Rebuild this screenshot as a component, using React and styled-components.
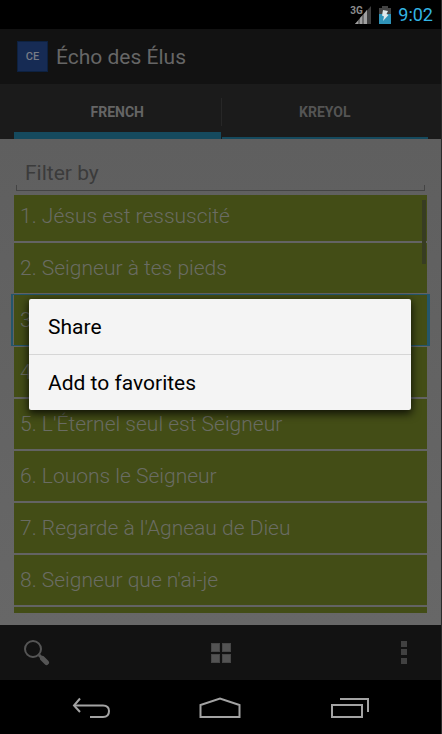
import React, { useState } from 'react';
import styled, { createGlobalStyle } from 'styled-components';

const songs = [
    'Jésus est ressuscité',
    'Seigneur à tes pieds',
    '',
    '',
    "L'Éternel seul est Seigneur",
    'Louons le Seigneur',
    "Regarde à l'Agneau de Dieu",
    "Seigneur que n'ai-je",
];

const App = () => {
    const [filter, setFilter] = useState('');
    const [tab, setTab] = useState('french');

    return (
        <Screen>
            <GlobalStyle />
            <StatusBar>
                <Signal>
                    <Network>3G</Network>
                    <SignalIcon />
                </Signal>
                <BatteryIcon />
                <Clock>9:02</Clock>
            </StatusBar>

            <ActionBar>
                <AppIcon>CE</AppIcon>
                <Title>Écho des Élus</Title>
            </ActionBar>

            <Tabs role="tablist">
                <Tab role="tab" aria-selected={tab === 'french'} $active={tab === 'french'} onClick={() => setTab('french')}>
                    FRENCH
                </Tab>
                <TabDivider />
                <Tab role="tab" aria-selected={tab === 'kreyol'} $active={tab === 'kreyol'} onClick={() => setTab('kreyol')}>
                    KREYOL
                </Tab>
            </Tabs>

            <Content>
                <FilterBox>
                    <FilterInput
                        aria-label="Filter by"
                        placeholder="Filter by"
                        value={filter}
                        onChange={(e) => setFilter(e.target.value)}
                    />
                </FilterBox>
                <SongList>
                    {songs.map((song, i) => (
                        <Song key={i} $pressed={i === 2}>
                            {i + 1}. {song}
                        </Song>
                    ))}
                    <Song />
                    <ScrollThumb />
                </SongList>
            </Content>

            <BottomBar>
                <BarButton aria-label="Search"><SearchIcon /></BarButton>
                <BarButton aria-label="Categories"><GridIcon /></BarButton>
                <BarButton aria-label="More options"><MoreIcon /></BarButton>
            </BottomBar>

            <NavBar>
                <NavButton aria-label="Back"><BackIcon /></NavButton>
                <NavButton aria-label="Home"><HomeIcon /></NavButton>
                <NavButton aria-label="Recent apps"><RecentsIcon /></NavButton>
            </NavBar>

            <Overlay>
                <Menu role="menu">
                    <MenuItem role="menuitem">Share</MenuItem>
                    <MenuItem role="menuitem">Add to favorites</MenuItem>
                </Menu>
            </Overlay>
        </Screen>
    );
};

// Icons
const SignalIcon = () => (
    <svg width="18" height="18" viewBox="0 0 18 18">
        <path d="M1 18 L17 0 V18 Z" fill="#3e3e3e" />
        <path d="M1 18 L13 4 V18 Z" fill="#6c6c6c" />
        <path d="M1 18 L4 15 V18 Z M6 12 V18 H8 V10 Z M10 8 V18 H13 V4 Z" fill="#a0a0a0" />
    </svg>
);

const BatteryIcon = () => (
    <svg width="12" height="18" viewBox="0 0 12 18">
        <path d="M3 0 H9 V2 H12 V9 H0 V2 H3 Z" fill="#444" />
        <path d="M0 8 H12 V18 H0 Z" fill="#2f93b8" />
        <path d="M4 4 L9 5 L7.5 8 L9.5 9 L4 15 L5 10.5 L3 9.5 Z" fill="#dfe7ea" />
    </svg>
);

const SearchIcon = () => (
    <svg width="26" height="26" viewBox="0 0 26 26" fill="none" stroke="#555">
        <circle cx="9" cy="9" r="8" strokeWidth="2" />
        <path d="M15 15 L18 18" strokeWidth="3" />
        <path d="M18.5 18.5 L22.5 22.5" strokeWidth="5" strokeLinecap="round" />
    </svg>
);

const GridIcon = () => (
    <svg width="22" height="20" viewBox="0 0 22 20" fill="#535353" stroke="#464646">
        <rect x="1.5" y="0.5" width="8" height="8" />
        <rect x="12.5" y="0.5" width="8" height="8" />
        <rect x="1.5" y="11.5" width="8" height="8" />
        <rect x="12.5" y="11.5" width="8" height="8" />
    </svg>
);

const MoreIcon = () => (
    <svg width="6" height="24" viewBox="0 0 6 24" fill="#414141">
        <rect y="0" width="6" height="6" />
        <rect y="8" width="6" height="6" />
        <rect y="17" width="6" height="6" />
    </svg>
);

const BackIcon = () => (
    <svg width="40" height="22" viewBox="0 0 40 22" fill="none" stroke="#a3a3a3" strokeWidth="2">
        <path d="M8 1.5 L2 8.5 L8 15" />
        <path d="M2 8.5 H31 C35 8.5 37 11 37 14 C37 17.5 35 20 31 20 H18" />
    </svg>
);

const HomeIcon = () => (
    <svg width="42" height="22" viewBox="0 0 42 22" fill="none" stroke="#a3a3a3" strokeWidth="2">
        <path d="M1.5 20 V8 L21 1.5 L40.5 8 V20 Z" />
    </svg>
);

const RecentsIcon = () => (
    <svg width="40" height="22" viewBox="0 0 40 22" fill="none" stroke="#a3a3a3" strokeWidth="2">
        <rect x="3" y="8" width="30" height="12" />
        <path d="M11 2 H39 V15" />
    </svg>
);

// Styled components
const GlobalStyle = createGlobalStyle`
  * {
    box-sizing: border-box;
  }

  body {
    margin: 0;
    background: #000;
    font-family: Roboto, 'Liberation Sans', sans-serif;
  }

  button {
    margin: 0;
    padding: 0;
    border: none;
    background: none;
    font-family: inherit;
    cursor: pointer;
  }
`;

const Screen = styled.div`
  position: relative;
  display: flex;
  flex-direction: column;
  height: 100vh;
  border-right: 1px solid #2b2b2b;
`;

const StatusBar = styled.div`
  display: flex;
  justify-content: flex-end;
  align-items: center;
  gap: 7px;
  height: 29px;
  padding-right: 8px;
  background: #000;
`;

const Signal = styled.div`
  position: relative;
  display: flex;
`;

const Network = styled.span`
  position: absolute;
  left: -4px;
  top: 0;
  font-size: 10px;
  line-height: 10px;
  font-weight: 700;
  color: #8c8c8c;
`;

const Clock = styled.span`
  font-size: 18px;
  line-height: 24px;
  color: #33b5e5;
`;

const ActionBar = styled.header`
  display: flex;
  align-items: center;
  gap: 8px;
  height: 55px;
  padding: 0 17px;
  background: #121212;
`;

const AppIcon = styled.div`
  display: grid;
  place-items: center;
  width: 31px;
  height: 31px;
  border: 1px solid #0d2140;
  background: #162b54;
  color: #777c86;
  font-size: 11px;
  font-weight: 500;
`;

const Title = styled.h1`
  margin: 0;
  font-size: 21px;
  font-weight: 400;
  color: #666;
`;

const Tabs = styled.div`
  display: grid;
  grid-template-columns: 1fr 1px 1fr;
  height: 55px;
  padding: 0 13px 0 14px;
  background: #1b1b1b;
`;

const Tab = styled.button`
  display: flex;
  align-items: center;
  justify-content: center;
  font-size: 14px;
  font-weight: 700;
  color: ${(props) => (props.$active ? '#656565' : '#545454')};
  box-shadow: inset 0 ${(props) => (props.$active ? '-7px' : '-2px')} 0 #154a5e;
`;

const TabDivider = styled.div`
  align-self: center;
  height: 28px;
  background: #272727;
`;

const Content = styled.main`
  display: flex;
  flex-direction: column;
  flex: 1;
  min-height: 0;
  padding: 12px 14px;
  background: linear-gradient(#5f5f5f, #676767);
`;

const FilterBox = styled.div`
  position: relative;
  margin: 0 2px 4px;

  /* underline with a short tick at both ends */
  &::after {
    content: '';
    position: absolute;
    left: 0;
    right: 0;
    bottom: 0;
    height: 5px;
    border: 1px solid #444;
    border-top: none;
    pointer-events: none;
  }
`;

const FilterInput = styled.input`
  display: block;
  width: 100%;
  height: 40px;
  padding: 4px 9px 0;
  border: none;
  outline: none;
  background: none;
  font-family: inherit;
  font-size: 21px;
  color: #333;

  &::placeholder {
    color: #3b3b3b;
    opacity: 1;
  }
`;

const SongList = styled.ul`
  position: relative;
  flex: 1;
  min-height: 0;
  margin: 0;
  padding: 0;
  list-style: none;
  overflow-y: clip;

  /* the list is scrolled by a few pixels */
  li:first-child {
    margin-top: -4px;
  }
`;

const Song = styled.li`
  position: relative;
  height: 52px;
  padding: 0 6px;
  border-bottom: 2px solid #636363;
  background: #434d16;
  font-size: 21px;
  line-height: 50px;
  font-weight: 300;
  color: #6a6c63;
  white-space: nowrap;

  &::after {
    content: '';
    display: ${(props) => (props.$pressed ? 'block' : 'none')};
    position: absolute;
    inset: -1px -3px;
    border: 2px solid #24566b;
    border-width: 1px 3px 1px 2px;
  }
`;

const ScrollThumb = styled.div`
  position: absolute;
  top: 5px;
  right: 1px;
  width: 4px;
  height: 64px;
  background: #373c22;
`;

const BottomBar = styled.div`
  display: flex;
  justify-content: space-between;
  height: 55px;
  padding: 0 9px;
  background: #121212;
`;

const BarButton = styled.button`
  display: grid;
  place-items: center;
  width: 56px;
`;

const NavBar = styled.nav`
  display: grid;
  grid-template-columns: repeat(3, 1fr);
  height: 54px;
  padding: 2px 28px 0;
  background: #000;
`;

const NavButton = styled.button`
  display: grid;
  place-items: center;
`;

const Overlay = styled.div`
  position: absolute;
  inset: 29px 0 54px;
  display: flex;
  align-items: center;
  padding: 0 30px 0 29px;
`;

const Menu = styled.div`
  flex: 1;
  border-radius: 2px;
  background: #f4f4f4;
  box-shadow: 0 3px 8px 1px rgba(0, 0, 0, 0.75);
`;

const MenuItem = styled.button`
  display: block;
  width: 100%;
  height: 55px;
  padding: 0 19px;
  text-align: left;
  font-size: 21px;
  color: #000;

  & + & {
    height: 56px;
    border-top: 1px solid #d6d6d6;
  }
`;

export default App;
